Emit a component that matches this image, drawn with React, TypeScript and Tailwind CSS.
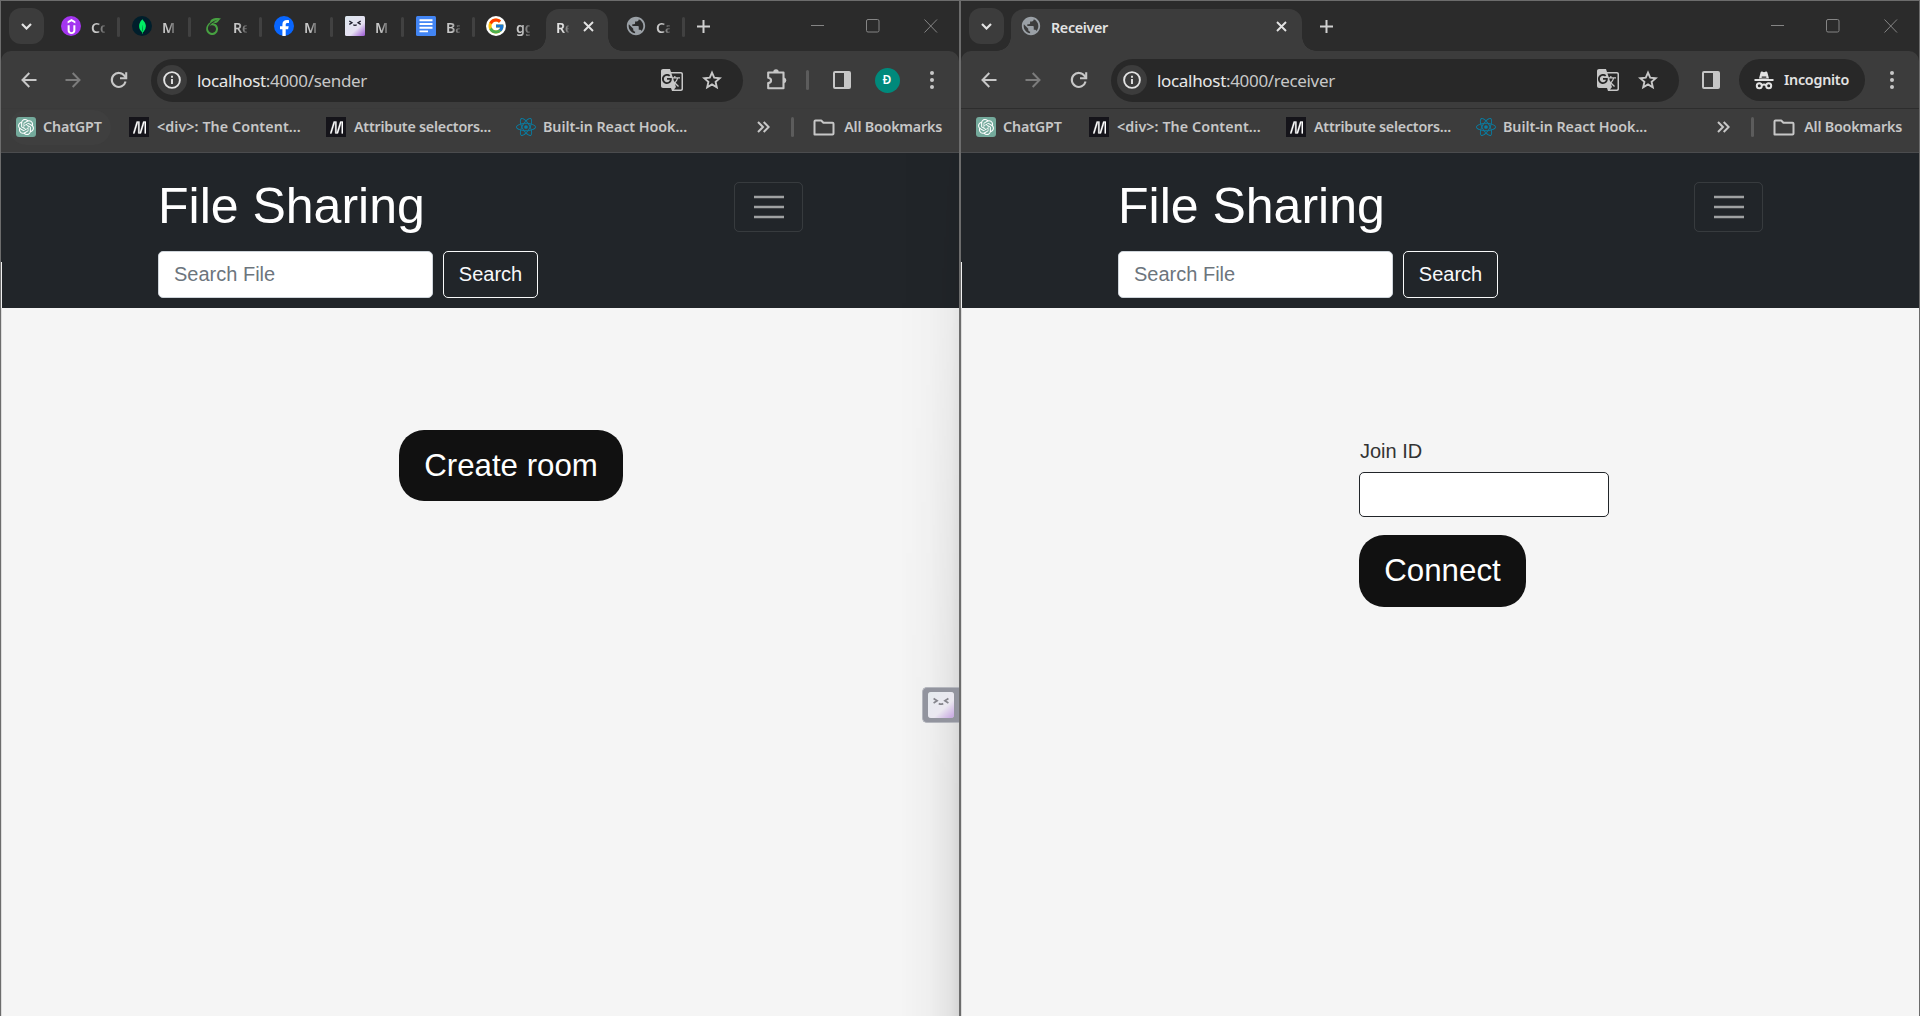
import type { ReactNode } from 'react';
import { SiUdemy, SiMongodb, SiOverleaf, SiOpenai, SiMdnwebdocs, SiReact } from 'react-icons/si';
import { FcGoogle } from 'react-icons/fc';
import { MdPublic, MdGTranslate } from 'react-icons/md';

/* ---------- icons ---------- */

const Back = () => (
  <svg width="16" height="16" viewBox="0 0 16 16" fill="none" stroke="currentColor" strokeWidth="2">
    <path d="M15.5 8H1.8M8.3 1L1.5 8l6.8 7" />
  </svg>
);

const Reload = () => (
  <svg width="18" height="18" viewBox="0 0 18 18" fill="none" stroke="currentColor" strokeWidth="2.1">
    <path d="M15.6 10.6A7 7 0 1 1 14.6 5l1.6 1.9" />
    <path d="M16.2 1.2v6.1H10" />
  </svg>
);

const Info = () => (
  <svg width="18" height="18" viewBox="0 0 18 18" fill="none" stroke="currentColor" strokeWidth="1.9">
    <circle cx="9" cy="9" r="7.9" />
    <path d="M9 8v5M9 4.7v2" />
  </svg>
);

const Star = () => (
  <svg width="20" height="20" viewBox="0 0 20 20" fill="none" stroke="currentColor" strokeWidth="1.9">
    <path d="M10 2.6l2.2 5.1 5.6.5-4.2 3.7 1.2 5.4L10 14.4l-4.8 2.9 1.2-5.4-4.2-3.7 5.6-.5z" />
  </svg>
);

const Puzzle = () => (
  <svg width="22" height="22" viewBox="0 0 22 22">
    <path
      d="M2.2 3.500h15.300v15.800H2.200v-5.200c3.800-.6 3.800-4.800 0-5.400z"
      fill="none"
      stroke="currentColor"
      strokeWidth="2.1"
      strokeLinejoin="round"
    />
    <path d="M7.300 3a2.700 2.700 0 0 1 5.400 0zM18 8.500a2.900 2.900 0 0 1 0 5.700z" fill="currentColor" />
  </svg>
);

const SidePanel = () => (
  <svg width="18" height="18" viewBox="0 0 18 18">
    <rect x="1" y="1" width="16" height="16" rx="1" fill="none" stroke="currentColor" strokeWidth="2" />
    <rect x="11" y="1" width="6" height="16" fill="currentColor" />
  </svg>
);

const Dots = () => (
  <svg width="4" height="18" viewBox="0 0 4 18" fill="currentColor">
    <circle cx="2" cy="2" r="2" />
    <circle cx="2" cy="9" r="2" />
    <circle cx="2" cy="16" r="2" />
  </svg>
);

const Incognito = () => (
  <svg width="20" height="19" viewBox="0 0 20 19">
    <path d="M5 7.600L6.600 1.400c.2-.8.9-1 1.500-.8L10 1.200l1.900-.6c.6-.2 1.300 0 1.500.8L15 7.600z" fill="#e3e3e3" />
    <path d="M7.700 6.200h4.600" stroke="#282828" strokeWidth="1.200" />
    <path d="M.5 9h19" stroke="#e3e3e3" strokeWidth="2" />
    <g fill="none" stroke="#e3e3e3" strokeWidth="2">
      <circle cx="5.300" cy="14.700" r="2.500" />
      <circle cx="14.700" cy="14.700" r="2.500" />
      <path d="M7.800 14.300c1.400-.9 3-.9 4.400 0" />
    </g>
  </svg>
);

const Folder = () => (
  <svg width="22" height="17" viewBox="0 0 22 17" fill="none" stroke="currentColor" strokeWidth="2" strokeLinejoin="round">
    <path d="M1.500 15.500v-13q0-1 1-1h5.700l2.200 2.200h9.100q1 0 1 1v9.800q0 1-1 1z" />
  </svg>
);

const Close = () => (
  <svg width="11" height="11" viewBox="0 0 11 11" stroke="currentColor" strokeWidth="1.900">
    <path d="M1 1l9 9M10 1l-9 9" />
  </svg>
);

const Plus = () => (
  <svg width="13" height="13" viewBox="0 0 13 13" stroke="currentColor" strokeWidth="2">
    <path d="M6.500 0v13M0 6.500h13" />
  </svg>
);

const Face = ({ size, id }: { size: number; id: string }) => (
  <svg width={size} height={size} viewBox="0 0 20 20">
    <defs>
      <linearGradient id={id} x1="0.1" y1="0" x2="1" y2="1">
        <stop offset="0" stopColor="#dde6ee" />
        <stop offset=".6" stopColor="#e6e1f2" />
        <stop offset="1" stopColor="#9a55d2" />
      </linearGradient>
    </defs>
    <rect width="20" height="20" rx="1.500" fill={`url(#${id})`} />
    <path d="M4.300 5l2.700 1.700-2.700 1.700M15.700 5L13 6.700l2.700 1.700M8.300 8.800q1.700 1.200 3.400 0" fill="none" stroke="#1d1d2b" strokeWidth="1.300" />
  </svg>
);

const Facebook = () => (
  <svg width="20" height="20" viewBox="0 0 20 20">
    <circle cx="10" cy="10" r="10" fill="#0866ff" />
    <path d="M8.400 20v-6.700H6v-3h2.400V8.700c0-3.200 1.500-4.700 4.700-4.700.6 0 1.400.1 1.900.2v2.700h-1.300c-1.500 0-2 .6-2 1.900v1.500h3l-.6 3h-2.400V20z" fill="#fff" />
  </svg>
);

const Docs = () => (
  <svg width="20" height="20" viewBox="0 0 20 20">
    <rect width="20" height="20" rx="1.500" fill="#4285f4" />
    <path d="M3.500 4.300h13M3.500 8h13M3.500 11.700h13M3.500 15.400h8.500" stroke="#fff" strokeWidth="1.900" />
  </svg>
);

const Disc = ({ className, children }: { className: string; children: ReactNode }) => (
  <span className={`flex size-5 items-center justify-center overflow-hidden ${className}`}>{children}</span>
);

const Globe = () => <MdPublic className="-m-px size-[22px] text-[#9aa0a6]" />;

/* ---------- tab strip ---------- */

function MiniTab({ icon, label, className = 'w-[71px]', divider = true }: { icon: ReactNode; label: string; className?: string; divider?: boolean }) {
  return (
    <div className={`flex h-full shrink-0 items-center ${className}`}>
      <span className="flex size-5 shrink-0 items-center justify-center">{icon}</span>
      <span className="ml-2.5 mt-[3px] w-[14px] shrink-0 overflow-hidden whitespace-nowrap text-[#c7c7c7] [mask-image:linear-gradient(to_right,#000_40%,rgba(0,0,0,0.2)_100%)]">
        {label}
      </span>
      {divider && <span className="ml-3 mt-0.5 h-5 w-[2.500px] rounded bg-[#414141]" />}
    </div>
  );
}

function ActiveTab({ children, className }: { children: ReactNode; className: string }) {
  return (
    <div className={`relative mt-2 flex h-[42px] shrink-0 items-center rounded-t-[13px] bg-[#3c3c3c] ${className}`}>
      <span className="absolute bottom-0 -left-3.5 size-3.5 bg-[radial-gradient(circle_at_0_0,transparent_13.5px,#3c3c3c_14px)]" />
      <span className="absolute -right-3.5 bottom-0 size-3.5 bg-[radial-gradient(circle_at_100%_0,transparent_13.5px,#3c3c3c_14px)]" />
      {children}
    </div>
  );
}

function WindowControls() {
  return (
    <svg className="mr-[21px] ml-auto shrink-0" width="127" height="14" viewBox="0 0 127 14" fill="none" stroke="#858585" strokeWidth="1">
      <path d="M0 6.500h13" />
      <rect x="55.500" y=".5" width="12.500" height="12.500" rx="1.500" />
      <path d="M113.500.5l12.500 13M126 .5l-12.500 13" />
    </svg>
  );
}

function TabStrip({ children }: { children: ReactNode }) {
  return (
    <div className="flex h-[50px] items-center bg-[#2b2b2b] text-[14.3px] font-semibold tracking-[-0.2px]">
      <div className="ml-2 flex h-9 w-[35px] shrink-0 items-center justify-center rounded-xl bg-[#3c3c3c] text-[#e3e3e3]">
        <svg width="11" height="7" viewBox="0 0 11 7" fill="none" stroke="currentColor" strokeWidth="2.200">
          <path d="M1 1l4.500 4.500L10 1" />
        </svg>
      </div>
      {children}
      <WindowControls />
    </div>
  );
}

/* ---------- toolbar and bookmarks ---------- */

function Toolbar({ path, pathClass, omniboxClass, children }: { path: string; pathClass: string; omniboxClass: string; children: ReactNode }) {
  return (
    <div className="flex h-[57px] items-center bg-[#3c3c3c] pt-px text-[#c7c7c7]">
      <div className="ml-5 flex w-[130px] shrink-0 items-center">
        <Back />
        <span className="ml-[28px] rotate-180 text-[#7c7c7c]"><Back /></span>
        <span className="ml-[29px]"><Reload /></span>
      </div>
      <div className={`flex h-[43px] shrink-0 items-center rounded-full bg-[#282828] ${omniboxClass}`}>
        <span className="ml-1.5 flex size-[30px] items-center justify-center rounded-full bg-[#3c3c3c] text-[#e3e3e3]"><Info /></span>
        <span className={`mt-px ml-2.5 whitespace-nowrap text-[17px] ${pathClass}`}>
          <span className="text-[#e8e8e8]">localhost</span>:4000/{path}
        </span>
        <MdGTranslate className="ml-auto size-6" />
        <span className="mr-[21px] ml-[18px]"><Star /></span>
      </div>
      {children}
    </div>
  );
}

const Mdn = () => <Disc className="bg-[#15141a]"><SiMdnwebdocs className="size-[13px] stroke-white stroke-[0.5] text-white" /></Disc>;

function Bookmarks({ className, hover = false }: { className: string; hover?: boolean }) {
  return (
    <div className={`flex h-11 items-center border-t pb-[7px] text-[14.3px] font-semibold whitespace-nowrap text-[#c7c7c7] ${className}`}>
      <div className={`ml-2 flex h-[35px] w-[102px] shrink-0 items-center rounded-full pl-[7px] ${hover ? 'bg-[#3f3f3f]' : ''}`}>
        <Disc className="rounded-[3px] bg-[#74aa9c]"><SiOpenai className="size-4 text-white" /></Disc>
        <span className="ml-[7px] tracking-[-0.15px]">ChatGPT</span>
      </div>
      <div className="ml-[18px] flex w-[197px] shrink-0 items-center"><Mdn /><span className="ml-2 tracking-[0.08px]">{'<div>: The Content...'}</span></div>
      <div className="flex w-[190px] shrink-0 items-center"><Mdn /><span className="ml-2 tracking-[-0.24px]">Attribute selectors...</span></div>
      <div className="flex shrink-0 items-center"><SiReact className="size-5 text-[#087ea4]" /><span className="ml-[7px] tracking-[-0.05px]">Built-in React Hook...</span></div>
      <div className="mr-[17px] ml-auto flex shrink-0 items-center">
        <svg width="13" height="12" viewBox="0 0 13 12" fill="none" stroke="currentColor" strokeWidth="2">
          <path d="M1 1l5 5-5 5M6.700 1l5 5-5 5" />
        </svg>
        <span className="ml-[21px] h-5 w-[3px] rounded bg-[#5c5c5c]" />
        <span className="ml-[19px]"><Folder /></span>
        <span className="ml-[9px] tracking-[-0.22px]">All Bookmarks</span>
      </div>
    </div>
  );
}

/* ---------- web page ---------- */

const bigButton = 'block rounded-[25px] bg-[#111111] px-[25px] pb-px text-[31.25px] leading-[47px] text-white';

function SiteHeader() {
  return (
    <header className="h-[155px] bg-[#212529] pr-[156px] pl-[157px]">
      <div className="flex items-start justify-between pt-[22px]">
        <h1 className="mt-px text-[50px] leading-[60px] text-white">File Sharing</h1>
        <button className="mt-[7px] flex h-[50px] w-[69px] items-center justify-center rounded-[5px] border border-white/10">
          <svg width="30" height="24" viewBox="0 0 30 24" stroke="#fff" strokeOpacity=".57" strokeWidth="2.500">
            <path d="M0 2h30M0 12h30M0 22h30" />
          </svg>
        </button>
      </div>
      <div className="mt-[15px] flex gap-2.5">
        <input
          placeholder="Search File"
          className="h-[47px] w-[275px] rounded-[5px] border border-[#ced4da] bg-white px-[15px] text-[20px] placeholder:text-[#6c757d]"
        />
        <button className="h-[47px] w-[95px] rounded-[5px] border border-[#f8f9fa] pb-0.5 text-[20px] text-[#f8f9fa]">Search</button>
      </div>
    </header>
  );
}

function Page({ children }: { children: ReactNode }) {
  return (
    <main className="relative flex-1 bg-[#f5f5f5] font-['Liberation_Sans',Arial,sans-serif]">
      <SiteHeader />
      {children}
      <span className="absolute top-[109px] left-0 h-[46px] w-px bg-[#f0f0f0]" />
      <span className="absolute top-[155px] bottom-0 left-0 w-px bg-[#dcdcdc]" />
    </main>
  );
}

function Frame({ children }: { children: ReactNode }) {
  return (
    <section className="flex h-full w-[960px] flex-col overflow-hidden border border-b-0 border-[#6c6c6c] bg-[#3c3c3c] font-['Noto_Sans','Open_Sans',sans-serif]">
      {children}
    </section>
  );
}

export default function App() {
  return (
    <div className="flex h-[1016px] w-[1920px] overflow-hidden">
      <Frame>
        <TabStrip>
          <div className="ml-[17px] flex h-full items-center">
            <MiniTab icon={<Disc className="rounded-full bg-[#a435f0]"><SiUdemy className="size-[15px] text-white" /></Disc>} label="Co" />
            <MiniTab icon={<Disc className="rounded-full bg-[#001e2b]"><SiMongodb className="size-[15px] text-[#00ed64]" /></Disc>} label="M" />
            <MiniTab icon={<SiOverleaf className="size-[17px] text-[#47a141]" />} label="Re" />
            <MiniTab icon={<Facebook />} label="M" />
            <MiniTab icon={<Face size={20} id="face-tab" />} label="M" />
            <MiniTab icon={<Docs />} label="Ba" className="w-[70px]" />
            <MiniTab icon={<Disc className="rounded-full bg-white"><FcGoogle className="size-[18px]" /></Disc>} label="gg" className="w-[60px]" divider={false} />
            <ActiveTab className="w-[62px] pl-[10px] text-[#e3e3e3]">
              <span className="mb-1 w-[13px] overflow-hidden [mask-image:linear-gradient(to_right,#000_50%,rgba(0,0,0,0.1)_100%)]">Re</span>
              <span className="mb-2 ml-[14px]"><Close /></span>
            </ActiveTab>
            <MiniTab icon={<Globe />} label="Ca" className="ml-[18px] w-[71px]" />
            <span className="text-[#d0d0d0]"><Plus /></span>
          </div>
        </TabStrip>
        <div className="bg-[#2b2b2b]"><div className="overflow-hidden rounded-t-[10px]">
          <Toolbar path="sender" pathClass="tracking-[-0.33px]" omniboxClass="w-[592px]">
            <span className="ml-[23px]"><Puzzle /></span>
            <span className="ml-[18px] h-5 w-[2.500px] rounded bg-[#5c5c5c]" />
            <span className="ml-6"><SidePanel /></span>
            <span className="ml-6 flex size-[25px] items-center justify-center rounded-full bg-[#00897b] text-[12px] font-semibold text-white">Đ</span>
            <span className="ml-[30px]"><Dots /></span>
          </Toolbar>
        </div></div>
        <Bookmarks className="border-[#3a3a3a]" hover />
        <div className="h-px shrink-0 bg-[#4b4c4e]" />
        <Page>
          <button className={`mt-[122px] ml-[398px] h-[71px] w-[224px] whitespace-nowrap ${bigButton}`}>Create room</button>
          <div className="absolute top-[534px] right-0 z-10 flex h-9 w-[37px] items-center rounded-l-[5px] border border-r-0 border-[#b4b6bd] bg-[#92949e] pl-[5px]">
            <span className="overflow-hidden rounded-[3px] bg-[#eee]"><span className="block opacity-50"><Face size={26} id="face-dock" /></span></span>
          </div>
          <div className="absolute top-0 right-0 bottom-0 w-[60px] bg-[linear-gradient(to_right,transparent,rgba(0,0,0,0.025)_50%,rgba(0,0,0,0.07)_85%,rgba(0,0,0,0.13))] [mask-image:linear-gradient(to_bottom,rgba(0,0,0,0.35),#000_75%)]" />
        </Page>
      </Frame>
      <Frame>
        <TabStrip>
          <ActiveTab className="ml-[7px] w-[291px] pl-[10px] text-[#e3e3e3]">
            <span className="mb-2"><Globe /></span>
            <span className="mb-1 ml-2.5 tracking-[-0.32px]">Receiver</span>
            <span className="mr-[15px] mb-2 ml-auto"><Close /></span>
          </ActiveTab>
          <span className="ml-[18px] text-[#d0d0d0]"><Plus /></span>
        </TabStrip>
        <div className="bg-[#2b2b2b]"><div className="overflow-hidden rounded-t-[10px]">
          <Toolbar path="receiver" pathClass="tracking-[-0.32px]" omniboxClass="w-[568px]">
            <span className="ml-[23px]"><SidePanel /></span>
            <span className="ml-[19px] flex h-[42px] w-[126px] shrink-0 items-center rounded-full bg-[#282828] pl-[15px]">
              <Incognito />
              <span className="ml-2.5 text-[14.3px] font-semibold tracking-[-0.24px] text-[#e3e3e3]">Incognito</span>
            </span>
            <span className="ml-[25px]"><Dots /></span>
          </Toolbar>
        </div></div>
        <Bookmarks className="border-[#2d2d2d]" />
        <div className="h-px shrink-0 bg-[#4b4c4e]" />
        <Page>
          <div className="mt-[128px] ml-[398px] flex flex-col items-start">
            <label className="pl-px text-[20px] leading-[30px] text-[#333]">Join ID</label>
            <input className="mt-1.5 h-[45px] w-[250px] rounded-[5px] border border-[#212529] bg-white px-3" />
            <button className={`mt-[18px] h-[72px] w-[167px] ${bigButton}`}>Connect</button>
          </div>
        </Page>
      </Frame>
    </div>
  );
}
